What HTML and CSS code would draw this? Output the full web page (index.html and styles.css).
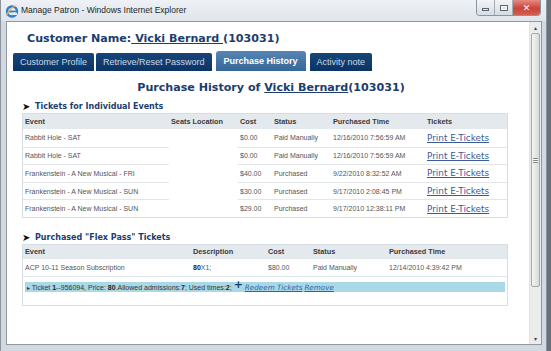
FILE: index.html
```html
<!DOCTYPE html>
<html lang="en">
<head>
  <meta charset="UTF-8">
  <title>Manage Patron</title>
  <link rel="stylesheet" href="styles.css">
</head>
<body>
  <div class="window">
    <div class="titlebar">
      <svg class="ie-icon" width="14" height="14" viewBox="0 0 14 14">
        <circle cx="7" cy="7.5" r="5" fill="none" stroke="#2b7fd0" stroke-width="2.4"/>
        <rect x="3.2" y="6.6" width="7.6" height="1.8" fill="#2b7fd0"/>
        <rect x="8" y="8.6" width="4" height="2.4" fill="#e8edf2"/>
        <path d="M1 12 C2 6 8 1 13 1.5 C10 2 5 5 2.5 11 Z" fill="#f2b233"/>
      </svg>
      <span class="title">Manage Patron - Windows Internet Explorer</span>
      <div class="controls">
        <span class="ctl min"><i></i></span>
        <span class="ctl max"><i></i></span>
        <span class="ctl close">&#x2715;</span>
      </div>
    </div>

    <div class="frame">
      <div class="viewport">
        <div class="page">
          <h1 class="cust">Customer Name:<a href="#"> Vicki Bernard </a>(103031)</h1>

          <nav class="tabs">
            <a href="#" class="tab">Customer Profile</a>
            <a href="#" class="tab">Retrieve/Reset Password</a>
            <a href="#" class="tab active">Purchase History</a>
            <a href="#" class="tab">Activity note</a>
          </nav>

          <h2 class="ph-title">Purchase History of <a href="#">Vicki Bernard</a>(103031)</h2>

          <h3 class="sec"><span class="arrow">&#x27A4;</span>Tickets for Individual Events</h3>
          <table class="grid events">
            <colgroup>
              <col style="width:146px"><col style="width:69px"><col style="width:34px">
              <col style="width:59px"><col style="width:94px"><col style="width:82px">
            </colgroup>
            <thead>
              <tr><th>Event</th><th>Seats Location</th><th>Cost</th><th>Status</th><th>Purchased Time</th><th>Tickets</th></tr>
            </thead>
            <tbody>
              <tr><td>Rabbit Hole - SAT</td><td class="seat"></td><td>$0.00</td><td>Paid Manually</td><td>12/16/2010 7:56:59 AM</td><td><a href="#" class="print">Print E-Tickets</a></td></tr>
              <tr><td>Rabbit Hole - SAT</td><td class="seat"></td><td>$0.00</td><td>Paid Manually</td><td>12/16/2010 7:56:59 AM</td><td><a href="#" class="print">Print E-Tickets</a></td></tr>
              <tr><td>Frankenstein - A New Musical - FRI</td><td class="seat"></td><td>$40.00</td><td>Purchased</td><td>9/22/2010 8:32:52 AM</td><td><a href="#" class="print">Print E-Tickets</a></td></tr>
              <tr><td>Frankenstein - A New Musical - SUN</td><td class="seat"></td><td>$30.00</td><td>Purchased</td><td>9/17/2010 2:08:45 PM</td><td><a href="#" class="print">Print E-Tickets</a></td></tr>
              <tr><td>Frankenstein - A New Musical - SUN</td><td class="seat"></td><td>$29.00</td><td>Purchased</td><td>9/17/2010 12:38:11 PM</td><td><a href="#" class="print">Print E-Tickets</a></td></tr>
            </tbody>
          </table>

          <h3 class="sec sec-flex"><span class="arrow">&#x27A4;</span>Purchased "Flex Pass" Tickets</h3>
          <table class="grid flex">
            <colgroup>
              <col style="width:168px"><col style="width:75px"><col style="width:45px">
              <col style="width:76px"><col style="width:120px">
            </colgroup>
            <thead>
              <tr><th>Event</th><th>Description</th><th>Cost</th><th>Status</th><th>Purchased Time</th></tr>
            </thead>
            <tbody>
              <tr><td>ACP 10-11 Season Subscription</td><td><b>80</b>X1;</td><td>$80.00</td><td>Paid Manually</td><td>12/14/2010 4:39:42 PM</td></tr>
              <tr class="sub">
                <td colspan="5">
                  <div class="ticket"><span class="tri">&#x25B8;</span> Ticket <b>1</b>--956094, Price: <b>80</b>.Allowed admissions:<b>7</b>; Used times:<b>2</b>;<span class="plus">+</span> <a href="#" class="act">Redeem Tickets</a> <a href="#" class="act">Remove</a></div>
                </td>
              </tr>
            </tbody>
          </table>
        </div>

        <div class="scrollbar">
          <span class="sb-arrow">&#x25B4;</span>
          <div class="thumb"><span class="grip"></span></div>
          <span class="sb-arrow down">&#x25BE;</span>
        </div>
      </div>
    </div>
  </div>
</body>
</html>
```

FILE: styles.css
```css
* {
  box-sizing: border-box;
}
body {
  margin: 0;
  width: 551px;
  height: 351px;
  overflow: hidden;
  background-color: #68717c;
  font-family: "Liberation Sans", Arial, sans-serif;
}
.window {
  width: 547px;
  height: 351px;
  display: flex;
  flex-direction: column;
  background: #d3d9e0;
  border-left: 1px solid #8c949e;
  border-right: 1px solid #8c949e;
}
.titlebar {
  height: 21px;
  display: flex;
  align-items: flex-start;
  background: linear-gradient(#eef1f5, #dfe5eb);
}
.ie-icon {
  margin: 4px 0 0 4px;
}
.title {
  margin: 5px 0 0 2px;
  font-size: 8.5px;
  color: #1e1e1e;
}
.controls {
  margin-left: auto;
  margin-right: 5px;
  display: flex;
  height: 16px;
  border: 1px solid #8c949e;
  border-top: none;
  border-radius: 0 0 4px 4px;
  overflow: hidden;
}
.ctl {
  width: 18px;
  display: flex;
  align-items: center;
  justify-content: center;
  background: linear-gradient(#f2f4f7, #d7dde4);
  border-right: 1px solid #a4acb6;
}
.min i {
  width: 7px;
  height: 3px;
  margin-top: 4px;
  border: 1px solid #5a6470;
}
.max i {
  width: 8px;
  height: 6px;
  border: 1px solid #5a6470;
  box-shadow: inset 0 0 0 1px #fff;
}
.close {
  width: 27px;
  border-right: none;
  background: linear-gradient(#e68a80, #c9453a 55%, #d4604f);
  color: #fff;
  font-size: 9px;
  font-weight: bold;
  font-family: "DejaVu Sans", sans-serif;
}
.frame {
  flex: 1;
  padding: 0 4px 6px 5px;
  display: flex;
}
.viewport {
  flex: 1;
  display: flex;
  background: #fff;
  border: 1px solid #8f99a5;
}
.page {
  flex: 1;
  padding-left: 6px;
}
.cust {
  margin: 10px 0 0 14px;
  font-family: "DejaVu Sans", Verdana, sans-serif;
  font-size: 11.1px;
  line-height: 14px;
  color: #1c3d6e;
}
.cust a,
.ph-title a {
  color: #1c3d6e;
  text-decoration: underline;
}
.tabs {
  margin-top: 5px;
  height: 20px;
  display: flex;
  align-items: flex-end;
  gap: 2px;
}
.tab {
  height: 18px;
  padding: 0 7px;
  display: flex;
  align-items: center;
  font-size: 9px;
  color: #cdd8e6;
  text-decoration: none;
  background: linear-gradient(#174577, #0b3466);
  border-radius: 2px 2px 0 0;
}
.tab.active {
  height: 20px;
  margin: 0 2px;
  padding: 0 8px;
  font-weight: bold;
  color: #fff;
  background: linear-gradient(#5785b6, #356797);
  border-radius: 3px 3px 0 0;
}
.ph-title {
  margin: 10px 0 0;
  text-align: center;
  font-family: "DejaVu Sans", Verdana, sans-serif;
  font-size: 11.1px;
  line-height: 14px;
  color: #1c3d6e;
}
.sec {
  margin: 7px 0 0 9px;
  display: flex;
  align-items: center;
  font-family: "DejaVu Sans", Verdana, sans-serif;
  font-size: 8px;
  line-height: 10px;
  color: #1c3d6e;
}
.sec-flex {
  margin-top: 15px;
}
.arrow {
  width: 13px;
  font-size: 10px;
  color: #111;
}
.grid {
  margin: 1px 0 0 9px;
  width: 486px;
  table-layout: fixed;
  border-collapse: separate;
  border-spacing: 0;
  border: 1px solid #d7dde3;
  font-size: 7px;
  color: #555;
}
.grid th {
  height: 15px;
  padding: 0 2px;
  text-align: left;
  font-size: 7.3px;
  color: #3a3a3a;
  background: #e4e9ee;
}
.grid td {
  height: 17.6px;
  padding: 0 2px;
  white-space: nowrap;
  border-top: 1px solid #e2e6ea;
}
.grid tbody tr:first-child td {
  border-top: none;
}
.grid td.seat {
  border-top: none;
}
.print {
  font-family: "DejaVu Sans", Verdana, sans-serif;
  font-size: 8.9px;
  color: #3a5a98;
}
.flex th {
  height: 14px;
}
.flex td {
  height: 17px;
}
.flex b {
  color: #222;
}
.flex .sub td {
  height: 28px;
  padding: 5px 2px 13px;
  vertical-align: top;
}
.ticket {
  height: 10px;
  line-height: 10px;
  padding-left: 2px;
  white-space: nowrap;
  background: #a9d8e6;
  color: #333;
  font-size: 7px;
}
.tri {
  font-size: 6px;
  color: #333;
}
.plus {
  position: relative;
  top: -2px;
  margin-left: 2px;
  font-family: "DejaVu Sans", sans-serif;
  font-size: 11px;
  font-weight: bold;
  color: #1c3d6e;
}
.act {
  font-family: "DejaVu Sans", Verdana, sans-serif;
  font-style: italic;
  font-size: 7.2px;
  color: #2f5fa8;
}
.scrollbar {
  width: 12px;
  display: flex;
  flex-direction: column;
  background: #ececec;
  border-left: 1px solid #e2e2e2;
}
.sb-arrow {
  height: 11px;
  display: flex;
  align-items: center;
  justify-content: center;
  font-size: 6px;
  color: #444;
}
.sb-arrow.down {
  margin-top: auto;
}
.thumb {
  height: 254px;
  margin: 0 1px;
  display: flex;
  align-items: center;
  justify-content: center;
  background: linear-gradient(to right, #f4f4f4, #dadada);
  border: 1px solid #a8a8a8;
  border-radius: 2px;
}
.grip {
  width: 5px;
  height: 5px;
  border-top: 1px solid #888;
  border-bottom: 1px solid #888;
  background: linear-gradient(#fff 1px, #888 1px, #888 2px, #fff 2px);
}
```
